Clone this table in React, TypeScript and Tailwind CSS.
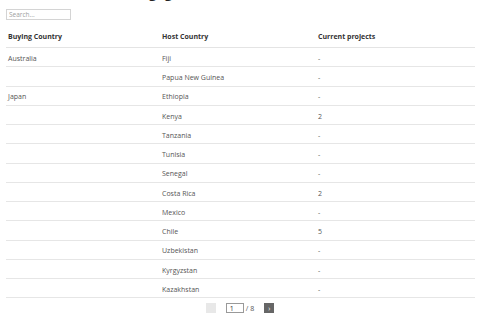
import React from "react";

const rows: [string, string, string][] = [
  ["Australia", "Fiji", "-"],
  ["", "Papua New Guinea", "-"],
  ["Japan", "Ethiopia", "-"],
  ["", "Kenya", "2"],
  ["", "Tanzania", "-"],
  ["", "Tunisia", "-"],
  ["", "Senegal", "-"],
  ["", "Costa Rica", "2"],
  ["", "Mexico", "-"],
  ["", "Chile", "5"],
  ["", "Uzbekistan", "-"],
  ["", "Kyrgyzstan", "-"],
  ["", "Kazakhstan", "-"],
];

export default function App() {
  return (
    <div
      className="relative w-[480px] h-[320px] overflow-hidden bg-white text-[#333]"
      style={{ fontFamily: '"Open Sans", "Liberation Sans", sans-serif' }}
    >
      <h1 className="absolute left-[132px] top-[-14.5px] text-[14px] leading-[14px] font-semibold text-[#222] whitespace-nowrap">
        Engagements
      </h1>
      <div className="px-[6px] pt-[9px]">
        <input
          placeholder="Search..."
          className="block w-[65px] h-[11px] border border-[#d4d4d4] text-[6.5px] leading-[9px] px-[2px] placeholder:text-[#a0a0a0] outline-none"
        />
        <div className="mt-[7px] w-[469px]">
          <div className="grid grid-cols-[154px_156px_1fr] h-[21px] pt-[1px] items-center border-b border-[#e4e4e4] font-bold text-[7px] text-[#333]">
            <div className="pl-[2px]">Buying Country</div>
            <div className="pl-[2px]">Host Country</div>
            <div className="pl-[2px]">Current projects</div>
          </div>
          {rows.map((r, i) => (
            <div
              key={i}
              className="grid grid-cols-[154px_156px_1fr] h-[19.25px] pt-[4px] items-center border-b border-[#e6e6e6] text-[7px] text-[#555]"
            >
              <div className="pl-[2px]">{r[0]}</div>
              <div className="pl-[2px]">{r[1]}</div>
              <div className="pl-[2px]">{r[2]}</div>
            </div>
          ))}
        </div>
        <div className="flex items-center justify-center gap-[10px] mt-[5px] text-[7px] text-[#555]">
          <div className="w-[10px] h-[10px] bg-[#e8e8e8]" />
          <div className="flex items-center gap-[2px]">
            <div className="w-[18px] h-[10px] border border-[#999] flex items-center pl-[3px] text-[7px] leading-none text-[#333]">
              1
            </div>
            <span className="leading-none">/ 8</span>
          </div>
          <div className="w-[10px] h-[10px] bg-[#666] text-white flex items-center justify-center text-[7px] leading-none">
            ›
          </div>
        </div>
      </div>
    </div>
  );
}
